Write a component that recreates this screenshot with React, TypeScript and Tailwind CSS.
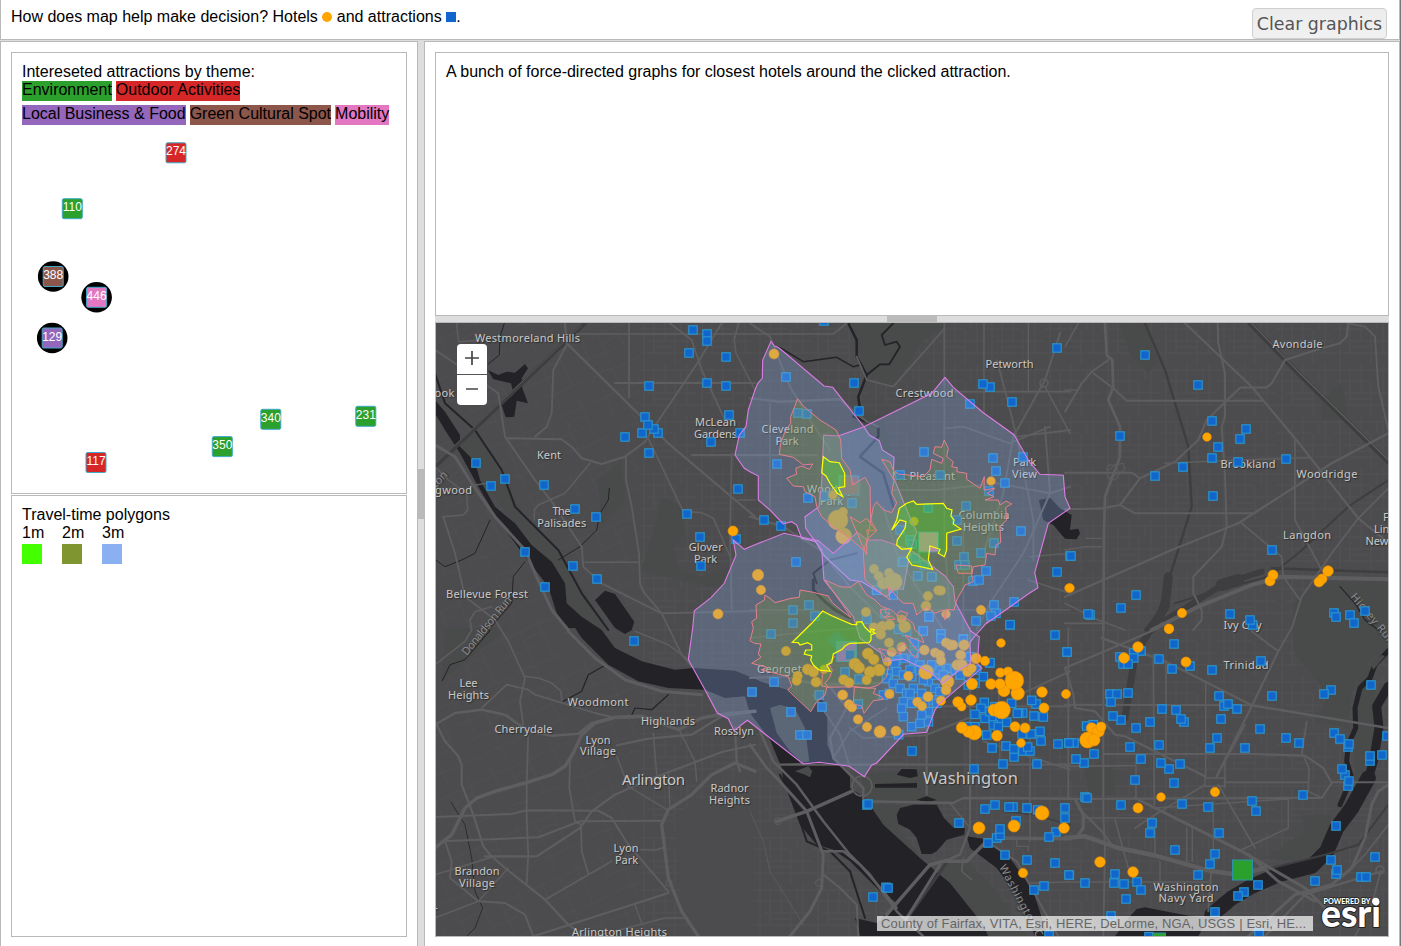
import React from "react";

type Sheet = "A" | "B" | "C" | "D" | "E" | "F" | "G" | "K";

// Survey sheets: each has an origin on the page and three units per pixel.
const ORIGIN: Record<Sheet, [number, number]> = {
  A: [435, 320],
  B: [750, 320],
  C: [1065, 320],
  D: [435, 628],
  E: [750, 628],
  F: [1065, 628],
  G: [745, 580],
  K: [860, 560],
};

const parse = (text: string) =>
  text
    .trim()
    .split(/\s+/)
    .map((pair) => pair.split(",").map(Number));

function trace(...parts: string[]): string {
  const out: string[] = [];
  for (const part of parts) {
    const [ox, oy] = ORIGIN[part[0] as Sheet];
    for (const [x, y] of parse(part.slice(1))) {
      out.push((ox + x / 3).toFixed(1) + "," + (oy + y / 3).toFixed(1));
    }
  }
  return out.join(" ");
}

const PARKS: string[][] = [
  ["A680,530 740,560 750,640 720,680 730,750 800,770 890,740 880,800 830,800 690,770 620,750 650,650"],
  ["B300,10 600,10 520,60 430,200 350,170 310,60"],
  ["B290,260 400,290 430,430 450,560 380,620 340,500 330,390"],
  ["A75,380 120,330 210,480 270,590 370,690 440,800 520,930 470,930 400,850 350,730 240,610 130,470"],
  ["C770,240 830,190 850,300 770,300"],
  ["C160,10 240,10 280,120 250,160 200,110"],
  ["C680,850 760,790 970,780 970,930 690,930"],
  ["E340,440 640,410 640,520 380,520 330,500"],
  ["E360,530 450,530 440,600 510,680 430,640"],
  ["E540,700 640,690 740,790 830,925 700,925 600,760"],
  ["E530,310 640,310 640,410 530,410"],
  ["F680,0 970,0 970,60 900,110 860,190 850,300 750,280 790,200 690,80"],
  ["F880,110 930,110 930,300 900,430 870,480 870,300"],
  ["F710,560 800,560 770,660 690,700 600,690 720,610"],
  ["F60,420 140,410 150,500 70,500"],
  ["A490,480 560,420 570,540 500,620"],
  ["D30,0 220,0 90,100 20,160"],
];

const WATER: string[][] = [
  ["A0,240 30,275 75,345 75,380 120,425 135,480 180,560 240,610 290,675 350,725 390,790 395,850 440,890 500,930", "D540,60 620,100 720,125 775,120 900,128 960,152", "E30,160 120,188 180,250 215,205 232,260 232,350 250,392 275,410 300,440 300,480 345,510 400,590 510,690 600,765 700,890 715,925 330,925 315,870 380,885 440,825 390,790 300,700 250,665 200,650 150,590 100,460 95,420 60,335 0,255", "D930,205 870,210 810,185 700,180 610,160 520,110 440,30 420,0", "A400,925 365,880 340,800 255,690 190,600 130,500 75,400 30,330 0,280"],
  ["A480,840 510,812 540,822 598,905 590,930", "D570,18 540,0"],
  ["A158,150 190,165 215,155 240,158 270,132 279,145 260,175 262,205 279,250 245,242 238,290 212,292 200,255 236,222 228,190 175,178"],
  ["B867,540 900,533 930,565 965,585", "C15,630 40,626 45,640 35,658 0,656", "B910,615 880,600"],
  ["E440,560 450,540 490,530 560,530 582,570 612,600 645,600 643,620 590,635 560,670 545,678 515,678 500,630 480,605 445,588"],
  ["E375,468 501,465 501,479 375,479"],
  ["E440,440 455,423 500,424 503,445 480,450"],
  ["E500,515 530,505 560,516 530,523"],
  ["E650,625 700,632 780,690 850,790 893,925 855,925 800,800 740,720 660,660"],
  ["F150,925 190,870 215,843 240,838 300,850 380,865 430,870 400,925"],
];

const STREAMS: [string[], number][] = [
  [["F970,68 930,110 915,150 885,180 870,240 872,300 850,350 845,400 860,450 825,530"], 5],
  [["F970,175 935,235 942,300 925,400 905,470"], 9],
  [["F910,450 860,540 815,600 785,670 740,715 640,740 560,775 500,810 440,860"], 15],
  [["B295,10 320,60 320,110 350,165 325,230 330,270 310,290 385,320 385,350 330,410 400,460 430,560"], 2.5],
  [["B430,10 395,45 405,75 440,65 450,80 418,133 390,133 350,165"], 1.8],
  [["B85,80 160,125 260,112 310,140 330,135"], 1.5],
  [["A0,160 30,250 120,330 200,450 240,560 370,690 440,820 520,930"], 2],
  [["A208,10 195,50 193,105 160,132"], 1],
  [["A523,505 520,540 495,580 485,630 435,680 370,720"], 1],
  [["A0,718 30,740 80,720 120,700 165,600"], 1],
  [["A270,725 235,770 230,850 160,930", "D165,8 90,95 45,110 22,158"], 1],
  [["D505,115 460,140 440,190 385,220"], 1.2],
  [["D700,200 650,245 600,240 590,262 530,270"], 1.2],
  [["D48,523 90,590 110,690 120,790 143,840 120,900 95,925"], 0.8],
  [["E90,440 130,520 170,640 240,670 300,730 345,870"], 2],
  [["C825,800 870,850 900,900 940,930"], 1.2],
  [["G205,0 205,30 240,65 270,90 315,115"], 3],
  [["B200,790 190,760 240,720 320,700"], 2],
];

const ROADS: [string[], number][] = [
  // north-west
  [["A390,10 395,70 700,370 960,590"], 2.2],
  [["A395,75 355,150 350,280 335,320 300,350"], 1.8],
  [["A582,10 582,232"], 1.8],
  [["A425,42 760,42 960,42", "B0,42 250,42 290,10"], 1.7],
  [["A540,189 960,189"], 1.8],
  [["A860,10 790,125 665,310 630,365 570,410 500,432 440,415 415,385 380,358 215,355"], 2],
  [["A705,10 770,60 800,150 870,300"], 1.8],
  [["A910,10 898,60 903,100 960,210"], 1.6],
  [["A0,90 60,130 190,220 210,350 300,480 350,545 440,680 445,740 500,790 680,880 960,873"], 1.9],
  [["A465,430 390,520 310,555 298,570 298,600"], 1.5],
  [["A573,410 573,480 590,560 612,700 615,790 625,815 680,880", "D740,80 770,115"], 1.8],
  [["A640,355 745,575 800,578 835,595 890,720"], 1.7],
  [["A450,727 610,727"], 1.6],
  [["A770,405 960,405", "B0,405 200,405"], 1.8],
  [["A890,400 885,640 890,870"], 1.7],
  [["A910,540 960,540"], 1.7],
  [["A0,375 60,410 110,490 180,590 270,690 300,760 350,870 400,930", "D400,10 480,90 570,155 680,190 800,200"], 3],
  [["A25,590 85,585 98,570 95,520 40,480 0,440"], 1.5],
  [["A25,590 60,700 90,830 130,860 180,900", "D220,40 270,150 255,220 265,290"], 1.8],
  [["A170,860 120,875 105,900 110,930", "D90,40 0,110"], 1.6],
  [["A180,485 110,497"], 1.4],
  [["A65,10 70,65 140,60"], 1.4],
  // south-west
  [["D0,290 60,255 140,245 210,260 280,310 350,323 430,317 470,285 540,268 600,268"], 2.5],
  [["D140,240 215,170 280,185 300,200 480,255 530,267"], 1.8],
  [["D270,145 310,150 350,165 378,190 380,217"], 1.6],
  [["D0,280 30,340 70,385 80,410 80,470 115,560 145,655 165,680 210,720 330,815 400,890 450,925"], 2.2],
  [["D0,660 50,620 90,540 125,510 180,490 270,465 350,440 390,415 415,375 440,320 480,285 540,268 620,265 730,305 800,270 850,260 960,250"], 3.5],
  [["D280,310 275,470 275,570 280,680 275,765"], 1.8],
  [["D435,330 405,400 403,480 420,580 438,590 440,670 460,738"], 1.8],
  [["D0,567 230,558 275,547 490,548 530,570 580,650 700,790"], 2],
  [["D20,640 310,628 435,580 680,578"], 2],
  [["D150,685 305,685 435,600 470,550 540,500 640,455 760,410 860,372 960,350"], 2.2],
  [["D545,352 640,332 770,320 860,265 960,250"], 2.2],
  [["D545,385 580,475 700,547"], 1.5],
  [["D655,315 665,440"], 1.5],
  [["D700,430 705,540"], 1.5],
  [["D730,300 780,400 785,460"], 1.5],
  [["D960,430 900,405 830,440 770,500 700,545 680,590 700,750 740,850 790,925"], 3.3],
  [["D330,815 530,700"], 1.8],
  [["D615,665 660,667 690,657"], 1.6],
  [["D295,925 420,885 700,795"], 2.2],
  [["D600,830 620,885"], 1.4],
  [["D480,925 690,870 750,870"], 1.5],
  [["D0,740 180,685"], 1.5],
  [["D30,640 50,700 45,750 130,820 210,825 270,860 295,925"], 2],
  [["D0,870 130,820 220,720"], 1.5],
  [["D900,300 905,400 915,430"], 2.5],
  [["D760,95 700,50 600,10"], 1.6],
  // north-centre
  [["B0,10 60,50 120,200 180,300 240,390"], 1.8],
  [["B0,235 90,245 270,238 350,305 385,320"], 2.4],
  [["B60,250 60,400 60,560"], 1.6],
  [["B320,110 350,180 430,200 580,30"], 1.8],
  [["B583,10 583,320 583,640 600,900"], 1.8],
  [["B702,10 702,280"], 1.6],
  [["B835,10 835,215"], 1.5],
  [["B600,215 960,215"], 1.7],
  [["B930,40 885,180 790,350 760,520 700,700"], 2],
  [["B885,200 960,340"], 1.6],
  [["B740,120 770,230 800,350 850,600 850,720"], 1.8],
  [["B585,325 640,320 780,370 900,320"], 1.8],
  [["B800,350 960,330"], 1.8],
  [["B430,510 560,510 740,490 900,520 960,500"], 2],
  [["B885,320 900,520 820,700 720,850 680,930"], 2],
  [["B840,710 960,700"], 1.6],
  [["B835,780 960,820"], 1.8],
  [["B400,560 440,700 500,800 580,930"], 2],
  [["B0,590 100,620 210,690 300,800 420,920"], 2.3],
  [["B0,870 190,870 300,900"], 1.5],
  [["B500,870 960,870"], 1.5],
  [["B640,560 640,930"], 1.5],
  // north-east
  [["C360,10 560,200 690,355 880,595 960,660"], 2.2],
  [["C120,10 125,105 142,120 145,200 130,240 165,320 165,410 120,530 117,640 115,930"], 2.8],
  [["C0,275 50,190 80,155 130,120"], 2],
  [["C85,160 145,205 185,242 595,242"], 2],
  [["C0,210 40,210"], 1.6],
  [["C40,10 0,80"], 1.5],
  [["C458,10 460,70 480,160 480,290 470,320 480,470 485,620 470,680 385,770 385,820 410,870 410,900 385,930"], 2],
  [["C850,10 845,50 825,70 770,85 660,120 620,190 605,202 525,203 425,300 400,360 330,425 225,475 165,555 110,565 50,567 0,567"], 2.2],
  [["C225,475 200,458 0,458"], 2],
  [["C165,555 210,580 560,580"], 2],
  [["C300,430 520,420 735,413"], 1.6],
  [["C970,340 800,430 520,610 320,690 0,830"], 2.3],
  [["C850,10 900,20 930,50 940,200 970,330"], 1.8],
  [["C690,355 690,600 770,750"], 1.8],
  [["C970,505 880,595 800,700 710,830 680,925"], 1.9],
  [["C530,610 620,685 650,710 655,770 705,840"], 1.8],
  [["C260,930 400,860 560,795 650,770 970,778"], 4],
  [["C0,690 60,680 110,680"], 1.5],
  [["C62,655 110,655"], 1.3],
  [["C0,850 100,900 180,930"], 1.8],
  [["C0,910 115,910"], 1.8],
  [["C125,450 130,435 150,435 165,460 150,480 130,475 125,455 150,435 175,430 180,450 150,465 130,475"], 1],
  // south-centre
  [["E0,150 100,145 200,170 240,170 410,165 530,235 530,500"], 2.2],
  [["E0,30 200,10 330,0"], 1.4],
  [["E300,300 340,330 530,322"], 2],
  [["E235,170 290,240 240,330 250,390 340,480 340,520 610,525 640,510 960,512"], 2.5],
  [["E250,390 300,310 410,240"], 1.8],
  [["E160,408 90,410 530,410 960,410"], 2.2],
  [["E660,0 660,600"], 2],
  [["E745,120 750,410"], 1.5],
  [["E960,130 680,260 530,320"], 2],
  [["E530,235 960,235"], 1.8],
  [["E700,340 960,425"], 1.8],
  [["E840,100 840,640"], 1.6],
  [["E955,0 955,510"], 1.8],
  [["E0,350 50,420 80,450 170,550 220,680 215,780 180,850 120,925"], 3],
  [["E30,310 70,400 140,470 220,580 300,680 360,740 440,850 520,925"], 2.5],
  [["E80,580 170,550 305,490"], 3.5],
  [["E215,670 280,670 330,710 400,790 440,840"], 2.5],
  [["E220,740 270,780 320,830 325,925"], 2.2],
  [["E410,860 540,710 580,700 650,700 710,640 750,630 960,632"], 3.5],
  [["E470,870 570,710"], 3],
  [["E660,600 630,680 580,700"], 2.4],
  [["E640,690 635,730 665,755"], 1.5],
  [["E710,640 800,700 850,790 925,925"], 2],
  [["E800,630 800,655 835,655 835,670"], 1.3],
  [["E840,765 960,762"], 1.5],
  [["E600,525 660,600"], 1.7],
  [["E0,550 40,640 60,730 160,890"], 0.8],
  [["E190,200 270,320 300,420"], 1.8],
  // south-east
  [["F0,120 200,35 280,0"], 2.2],
  [["F110,30 300,100 560,232 970,300"], 2.4],
  [["F640,70 560,235 455,445"], 2.2],
  [["F560,10 640,70 680,0"], 1.8],
  [["F0,230 560,232"], 2],
  [["F115,0 115,230 115,560 120,660 115,925"], 2],
  [["F265,80 268,530"], 1.8],
  [["F303,100 303,380"], 1.6],
  [["F422,165 422,450"], 1.6],
  [["F480,390 480,480"], 1.5],
  [["F0,120 25,200 30,240 90,250 150,320 180,325 420,445"], 2.2],
  [["F210,510 530,670 720,780 790,850"], 3],
  [["F115,378 560,378 720,383 775,420 800,465 770,510 0,513"], 2.2],
  [["F420,450 480,450 480,475 420,475 420,450"], 1.4],
  [["F213,380 213,513"], 1.6],
  [["F540,290 455,445"], 1.8],
  [["F0,415 210,413"], 1.8],
  [["F480,463 730,463"], 1.8],
  [["F800,463 970,463"], 2],
  [["F725,280 710,380"], 1.8],
  [["F715,383 732,420 730,490 770,510"], 1.6],
  [["F210,600 270,560 420,470"], 1.8],
  [["F460,470 570,660"], 1.7],
  [["F270,540 670,513 670,600 520,670"], 1.5],
  [["F40,540 110,610 140,650"], 2],
  [["F30,513 55,560 55,600 40,620"], 3],
  [["F0,630 60,625 160,660 260,680 440,730 520,740 600,720"], 4.5],
  [["F270,570 270,680"], 1.6],
  [["F365,600 365,700"], 1.5],
  [["F382,600 382,700"], 1.5],
  [["F60,570 270,570"], 1.5],
  [["F150,575 190,720"], 1.6],
  [["F0,762 430,762"], 1.5],
  [["F285,700 285,762"], 1.4],
  [["F440,710 430,850"], 2],
  [["F445,520 445,700"], 1.5],
  [["F550,925 690,800 800,770 860,720 900,630 920,530 940,490 970,470"], 3],
  [["F600,925 720,800 950,730"], 2.3],
  [["F550,680 640,760 750,820"], 3],
  [["F970,590 900,680 840,740"], 1.8],
  [["F870,925 920,830 947,730"], 1.6],
];

const RAILS: [string[], number][] = [
  [["A450,10 230,220 0,440"], 4],
  [["C555,10 700,160 970,425"], 5],
  [["C240,10 300,150 370,380 380,560 330,720 280,880 240,930"], 2.4],
  [["C970,480 850,560 700,700 610,770 460,810 330,850"], 2],
  [["C620,745 970,757"], 2.4],
  [["C590,755 480,790 400,840 300,900"], 6],
  [["C470,795 520,780"], 12],
  [["C310,770 300,860 260,925"], 9],
  [["F260,0 210,80 180,270"], 7],
  [["E600,690 480,860"], 3],
  [["F970,530 880,650 780,680 620,720"], 2],
  [["E760,550 850,560 960,590"], 1.5],
];

const SQUARES: string[] = [
  "A774,30 816,42 816,63 762,99 873,111 642,198 816,189 873,198 630,291 621,339 669,339 657,327 639,315 570,351 642,399 882,285 915,339 828,366 909,507 756,582 795,651 903,657 798,738 123,429 210,477 168,498 327,495 420,567 483,591 270,696 414,738 486,777 330,801",
  "B222,3 108,171 312,189 327,273 144,279 171,282 81,432 174,534 222,528 306,549 42,600 93,618 138,726 129,870 177,855 195,888 129,909 921,84 720,201 699,192 660,252 786,246 522,396 729,414 819,411 738,453 765,489 717,513 450,465 570,465 648,558 534,564 621,600 450,630 813,633 621,663 732,669 693,699 642,711 480,660 496,714 523,735 456,726 504,768 546,771 627,735 645,735 708,753 669,783 687,780 380,810 430,825 921,756 960,708 732,855 792,846 738,880 723,888 678,903 780,915 537,891 519,933 405,880 350,897 280,480 486,672",
  "C240,105 399,195 165,348 441,303 543,327 525,357 459,381 441,414 519,426 354,441 270,468 663,417 444,528 621,690 18,708 213,825 168,864 75,885 69,882 495,882 563,915 555,900 807,879 813,891 855,885 867,909 900,873",
  "D597,39",
  "E63,18 72,162 6,192 123,252 150,321 171,321 208,201 216,237 285,132 300,80 327,153 325,228 640,33 573,18 915,21 951,72 780,-10 719,105 351,531 354,528 486,369 627,585 705,543 735,531 789,537 777,537 831,540 863,546 798,579 740,630 750,622 750,603 945,540 945,570 918,612 897,627 714,645 765,681 831,696 915,705 958,741 882,774 852,786 369,807 408,778 414,780 672,423 759,408 861,408 792,387 726,360 768,354 792,363 819,369 840,369 833,357 873,339 924,348 957,345 870,310 880,267 858,228 852,264 818,255 806,255 845,217 843,318 816,318 897,922 446,320",
  "K130,5 50,90 173,48 215,50 207,170 190,213 243,222 243,235 163,248 163,280 310,238 20,178 115,208 140,215 130,295 110,300 160,300 180,315 105,310 85,340 80,355 110,335 130,345 150,330 155,350 100,370 88,400 70,405 120,385 140,400 160,385 150,400 130,425 155,430 125,445 130,470 155,500 205,485 180,490 205,455 185,465 205,365 225,345 235,330 265,325 250,345 285,330 215,315 205,335 190,360 185,400 225,385 240,395 215,420 230,430 195,430 300,345 180,330 330,290 350,330 370,350 345,370 390,308 325,375 373,427 363,445 345,463 375,475 400,470 405,440 420,480 440,487 400,495 415,500 380,525 325,500 345,500 472,460 455,430 390,455",
  "F327,48 6,72 228,69 206,75 206,90 165,87 174,108 189,108 282,93 321,123 375,114 441,126 588,99 135,198 156,198 189,195 138,222 168,276 144,264 213,300 255,282 291,243 333,246 357,282 348,273 462,204 477,234 489,228 516,243 468,273 621,204 798,186 777,198 918,171 585,303 456,330 435,360 540,360 663,330 702,345 807,315 825,333 849,357 852,348 966,324 951,381 915,399 915,384 840,441 831,423 849,474 852,459 714,501 561,519 573,549 429,537 351,528 327,465 312,423 288,405 345,408 228,393 195,357 282,351 87,378 57,405 33,393 27,345 12,345 210,456 60,507 66,510 168,531 261,585 255,615 462,615 330,666 450,678 435,708 399,741 579,771 537,792 519,804 450,852 582,915 813,594 798,696 813,738 816,726 750,759 930,687 888,747 903,747 60,765 12,741 147,765 150,738 177,768 216,762 228,786 183,813 138,864 252,926 65,294 85,290",
];

const CIRCLES: string[] = [
  "A894,633,15 849,882,15",
  "B72,102,15 723,483,13 249,525,13 279,576,14 264,600,30 281,648,24 492,604,13 24,765,17 33,810,14 372,747,14 386,768,14 417,759,14 400,790,18 430,785,27 534,828,14 565,811,14 573,812,14 528,858,15 588,882,13 693,870,14 957,804,13",
  "C426,351,13 615,783,15 624,765,15 789,753,16 771,777,15 762,786,15 15,804,13 351,879,14 312,926,14",
  "E876,192,16 882,240,15 948,198,13 813,345,13 825,300,15 687,600,18 792,594,18 876,555,21 942,600,16 819,735,14",
  "G123,213,14 363,96,14 386,142,14 411,140,16 407,163,15 434,135,15 479,140,18 470,118,13 432,188,14 440,216,14 470,201,14 427,245,13 369,221,17 386,238,16 330,252,18 342,263,17 402,270,18 375,276,17 365,300,14 188,268,16 205,275,16 158,288,14 155,302,14 213,306,15 237,268,13 296,299,15 312,308,15 293,345,15 312,373,14 321,382,14 339,418,14",
  "K193,270,15 198,336,22 145,348,14 88,402,14 262,365,20 258,390,15 243,422,14 204,410,15 172,426,14 186,438,14 60,515,18 108,513,15 21,501,14 258,248,14 272,255,16 280,255,14 312,255,16 302,285,15 225,278,14 240,285,14 243,302,14 292,315,16 305,315,17 323,335,15 335,325,14 348,295,16 375,303,14 336,372,17 333,420,16 305,440,13 294,426,16 393,372,16 421,338,14 444,335,14 432,392,18 420,372,16 473,400,20 463,362,28 402,450,18 425,450,26 343,518,22 325,515,17 306,503,17 411,527,16 465,500,15 423,249,13",
  "F219,57,16 177,90,16 363,102,15 312,3,14 3,198,13 80,300,16 100,310,18 108,297,15 68,336,24 87,336,18 450,492,14 288,507,13 219,540,15 105,702,16 204,732,16",
];

const REACH_3M: string[][] = [
  ["B63,64 73,78 85,82 222,198 248,202 342,320 358,345 388,362 397,390 432,412 430,470 483,600 500,635 482,690 460,808 432,808 410,830 335,785 300,780 220,705 197,665 155,655 140,615 125,605 100,612 60,570 25,540 25,468 0,455", "A928,445 900,405 913,345 933,320 940,270 960,210", "B23,190 37,175 38,120"],
  ["B221,345 265,348 342,320 545,220 585,172 610,202 700,278 793,345 838,425 870,463 940,466 945,530 960,565 895,610 854,758 864,803 838,820 710,910", "K383,185 345,228 330,247 332,310 305,325 248,370 215,340 180,322 130,297 70,305 62,278 0,235", "B310,890 222,780 215,690 185,650 167,625 165,590 207,560 215,490"],
  ["B0,680 102,640 205,662 250,700 322,637 352,660 395,660 482,690 585,768", "K280,80 285,125 332,213 358,230 352,310 365,325 240,430 225,450 200,517 130,523", "E460,320 380,405 365,412 343,446 298,415 208,403 160,408 0,283", "D937,277 897,308 880,272 847,255 810,185 760,95 773,0", "A778,872 828,833 868,790 903,706 895,660 928,688"],
];

const REACH_2M: string[][] = [
  ["B143,236 160,258 210,300 258,330 272,360 275,415 300,450 308,495 345,472 360,500 362,600 380,632 350,630 355,660 340,690 300,655 250,620 215,590 200,560 195,530 165,515 160,500 130,498 110,475 140,462 137,445 155,438 178,448 188,432 160,435 130,412 88,403 92,370 105,335 122,310 122,290"],
  ["B395,418 420,425 430,450 445,462 520,470 540,450 545,418 575,430 580,415 550,400 555,380 575,382 583,360 595,385 590,410 610,425 605,440 622,443 620,455 650,460 650,478 690,505 703,470 702,510 735,505 712,520 732,530 705,540 745,540 750,555 768,543 785,552 767,562 770,600 750,620 752,668 738,675 735,705 710,700 705,735 670,740 665,765 670,785 645,795 620,840 612,870 590,868 585,900 580,870 555,880 530,860 500,885 490,850 460,850 440,830 415,800 420,840 400,825 345,780 340,700 355,640 370,560 380,545 400,570 425,578 440,548 425,520 432,480"],
  ["G60,45 75,55 90,68 138,55 163,52 165,30 205,37 250,48 262,68 300,100 318,113 300,85 240,0 285,20 315,22 340,5 365,45 390,60 410,80 440,90 455,105 480,112 505,130 510,150 528,165 537,188 480,165 520,215 512,235 482,200 478,188 455,208 470,222 400,205 425,235 430,262 425,290 400,315 370,325 330,320 245,322 240,345 215,365 197,395 160,360 128,330 140,318 130,290 100,282 50,270 65,262 20,250 48,232 40,222 48,192 28,190 15,182 25,145 20,125 35,115 33,75 58,60"],
  ["G328,322 392,325 385,340 410,350 415,358 385,362 357,400 350,378 325,372"],
  ["B300,590 330,608 350,595 365,615 380,632 350,660 350,705"],
  ["B617,735 665,738 665,760 625,760"],
  ["G405,90 425,88 420,98 435,100 418,112 440,108 450,118 425,118 410,105"],
  ["G270,228 250,250 262,270 255,290 240,310 250,322", "G250,322 230,318 232,285 260,240"],
  ["G455,105 465,92 488,100 478,118 460,120"],
];

const REACH_1M: string[][] = [
  ["B220,410 240,425 268,428 284,460 284,500 265,503 278,530 262,520 240,490 228,468 215,458"],
  ["B470,550 490,543 500,553 580,550 590,565 606,570 603,588 612,600 610,612 633,627 590,640 590,690 583,710 565,700 570,688 540,678 535,720 548,748 510,740 485,735 470,712 485,685 455,688 440,675 442,660 465,625 468,605 450,600 438,615 425,630 440,600 448,565"],
  ["G233,93 260,107 320,133 335,134 335,126 350,125 360,142 377,158 378,147 388,149 383,156 391,160 378,165 378,180 372,188 315,190 300,198 292,208 265,222 260,248 245,255 256,274 222,270 205,255 197,240 200,228 178,222 182,210 200,210 200,195 188,188 165,195 160,188 142,187 200,130"],
];

type Label = [string, number, number, number, number?];
const LABELS: Label[] = [
  ["Westmoreland Hills", 527.5, 342, 105],
  ["McLean", 715.5, 426, 41],
  ["Gardens", 715.5, 438, 43],
  ["Kent", 549, 459, 24],
  ["The", 561.5, 515, 18],
  ["Palisades", 561.7, 527, 49],
  ["Glover", 705.7, 551, 34],
  ["Park", 705.5, 563, 23],
  ["Bellevue Forest", 487, 598, 82],
  ["Cleveland", 787.5, 433, 52],
  ["Park", 787, 445, 23],
  ["Crestwood", 924.5, 397, 58],
  ["Petworth", 1009.5, 368, 48],
  ["Woodley", 830, 493, 46],
  ["Park", 831.5, 505, 23],
  ["Mt Pleasant", 923.5, 480, 63],
  ["Columbia", 984, 519, 51],
  ["Heights", 983.5, 531, 41],
  ["Park", 1024.5, 466, 23],
  ["View", 1024.5, 478, 25],
  ["Avondale", 1297.5, 348, 50],
  ["Brookland", 1248, 468, 55],
  ["Woodridge", 1327, 478, 61],
  ["Langdon", 1307, 539, 48],
  ["Ivy City", 1242.5, 629, 38],
  ["Trinidad", 1246, 669, 45],
  ["Lee", 468.5, 687, 18],
  ["Heights", 468.5, 699, 41],
  ["Woodmont", 598, 706, 61],
  ["Highlands", 668, 725, 54],
  ["Cherrydale", 523.5, 733, 58],
  ["Lyon", 598, 744, 25],
  ["Village", 598, 755, 36],
  ["Rosslyn", 734, 735, 40],
  ["Arlington", 653.5, 785, 63, 15],
  ["Radnor", 729.5, 792, 38],
  ["Heights", 729.5, 804, 41],
  ["Lyon", 626, 852, 25],
  ["Park", 626.5, 864, 23],
  ["Brandon", 477, 875, 45],
  ["Village", 477, 887, 36],
  ["Arlington Heights", 619.5, 936, 95],
  ["Washington", 970.5, 784, 95, 16.5],
  ["Washington", 1186, 891, 65],
  ["Navy Yard", 1186, 902, 55],
];

const Lines = ({ rows, color }: { rows: [string[], number][]; color: string }) => (
  <g fill="none" stroke={color} strokeLinejoin="round" strokeLinecap="round">
    {rows.map(([parts, w], i) => (
      <polyline key={i} points={trace(...parts)} strokeWidth={w} />
    ))}
  </g>
);

const Areas = ({ rows, ...rest }: { rows: string[][] } & React.SVGProps<SVGGElement>) => (
  <g {...rest}>
    {rows.map((parts, i) => (
      <polygon key={i} points={trace(...parts)} />
    ))}
  </g>
);

function MapCanvas() {
  return (
    <svg viewBox="436 323 952 613" className="block h-[613px] w-[952px]">
      <defs>
        <pattern id="streets" width="58" height="52" patternUnits="userSpaceOnUse">
          <path d="M0 6H58M0 17H35M10 29H58M0 41H58M6 0V52M16 6V41M27 0V29M37 17V52M49 0V41M16 35H37M43 6V17" fill="none" stroke="#525254" strokeWidth=".8" />
        </pattern>
        <pattern id="lanes" width="64" height="60" patternUnits="userSpaceOnUse" patternTransform="rotate(-24)">
          <path d="M0 9H64M0 28H40M20 46H64M8 0V28M26 9V60M46 0V46M26 20Q36 14 46 20M0 52Q10 40 26 46" fill="none" stroke="#515153" strokeWidth=".8" />
        </pattern>
      </defs>
      <rect x="436" y="323" width="952" height="613" fill="#4c4c4e" />
      <rect x="436" y="323" width="204" height="613" fill="url(#lanes)" />
      <rect x="640" y="323" width="748" height="613" fill="url(#streets)" />
      <polygon points={trace("D720,560 790,520 950,480 960,925 790,925 740,850")} fill="#4c4c4e" />
      <Areas rows={PARKS} fill="#494b4a" />
      <Lines rows={STREAMS} color="#242328" />
      <Areas rows={WATER} fill="#232227" />
      <polygon points={trace("E60,240 90,230 135,242 165,300 178,400 158,404 120,370 80,315")} fill="#494b4a" />
      <polygon points={trace("E135,430 175,415 187,430 180,448 165,440 150,435")} fill="#494b4a" />
      <polygon points={trace("F915,105 950,80 960,85 925,125")} fill="#494b4a" />
      <Lines rows={RAILS} color="#3e3e40" />
      <polyline points={trace("A440,15 225,220 0,432")} fill="none" stroke="#5a5a5c" strokeWidth=".8" />
      <polyline points={trace("C560,10 705,160 970,420")} fill="none" stroke="#5e5e60" strokeWidth="1.2" />
      <Lines rows={ROADS} color="#5e5e60" />
      <g fill="none" stroke="#5e5e60" strokeWidth="1.6">
        <circle cx="862" cy="786" r="10" />
        <circle cx="1044" cy="383" r="4" />
        <circle cx="778" cy="821" r="3.5" strokeWidth="1" />
        <circle cx="819" cy="883" r="3.5" strokeWidth="1" />
        <circle cx="1380" cy="870" r="4" />
        <circle cx="669" cy="883" r="3" strokeWidth="1" />
      </g>

      <g fill="#c9c9c9" fontFamily="'Noto Sans', sans-serif" fontSize="11" style={{ textShadow: "1px 1px 1px #2b2b2b" }}>
        {LABELS.map(([text, x, y, w, size], i) => (
          <text key={i} x={x - w / 2} y={y} textLength={w} fontSize={size ?? 11}>
            {text}
          </text>
        ))}
        <text x="434.5" y="397" letterSpacing=".3">ook</text>
        <text x="435" y="494" letterSpacing=".4">gwood</text>
        <text x="757" y="673" letterSpacing=".4">Georget</text>
        <text x="1383" y="521">Fort</text>
        <text x="1374" y="533">Lincoln</text>
        <text x="1365.5" y="545">New</text>
        <text x="433" y="914">r</text>
        <g fill="#8b8b8d">
          <text transform="translate(467 656) rotate(-51)" textLength="72">Donaldson Run</text>
          <text transform="translate(999 867) rotate(62)" letterSpacing=".8">Washington Channel</text>
          <text transform="translate(1350 597) rotate(50)" letterSpacing=".6">Hickey Run</text>
          <text transform="translate(436 488) rotate(-46)">ton</text>
        </g>
      </g>

      <g fill="#1066cc" stroke="#2c93cb" strokeWidth="1.2">
        {SQUARES.flatMap((row) => {
          const [ox, oy] = ORIGIN[row[0] as Sheet];
          return parse(row.slice(1)).map(([x, y]) => (
            <rect key={row[0] + x + "-" + y} x={ox + x / 3 - 4.2} y={oy + y / 3 - 4.2} width="8.4" height="8.4" />
          ));
        })}
      </g>
      <g stroke="#2c93a8" strokeWidth="1">
        <rect x="840" y="476" width="19" height="19" fill="#8c564b" />
        <rect x="918.5" y="532" width="20" height="20" fill="#e377c2" />
        <rect x="836.5" y="641.5" width="20" height="20" fill="#9467bd" />
        <rect x="845.5" y="650.5" width="9" height="9" fill="#1066cc" />
        <rect x="1232.5" y="860" width="20" height="20" fill="#2ca02c" />
        <rect x="1152.5" y="933" width="13" height="10" fill="#2ca02c" />
      </g>
      <g fill="#ffa500" stroke="#e98f05" strokeWidth=".6">
        {CIRCLES.flatMap((row) => {
          const [ox, oy] = ORIGIN[row[0] as Sheet];
          return parse(row.slice(1)).map(([x, y, r]) => (
            <circle key={row[0] + x + "-" + y} cx={ox + x / 3} cy={oy + y / 3} r={r / 3} />
          ));
        })}
      </g>

      <Areas rows={REACH_3M} fill="#8cb0f2" fillOpacity=".27" stroke="#dc7ce4" strokeWidth="1.1" />
      <Areas rows={REACH_2M} fill="#7f972f" fillOpacity=".25" stroke="#e5808c" strokeWidth="1" />
      <Areas rows={REACH_1M} fill="#44ee00" fillOpacity=".3" stroke="#ffff00" strokeWidth="1.2" />
      <polygon points="837,631 847,641 837,651 827,641" fill="#4aa87a" fillOpacity=".4" />

      <g fontFamily="Lato, sans-serif" fontWeight="900" fill="#fff" stroke="#222" strokeWidth="2" paintOrder="stroke" strokeLinejoin="round">
        <text x="1323.5" y="903.5" fontSize="7.6" textLength="47" lengthAdjust="spacingAndGlyphs" strokeWidth="1.5">
          POWERED BY
        </text>
        <text x="1321" y="926.5" fontSize="37" textLength="60" lengthAdjust="spacingAndGlyphs">
          esri
        </text>
        <circle cx="1375.7" cy="901.3" r="3.6" stroke="none" />
      </g>
    </svg>
  );
}

const NODES = [
  { id: 274, x: 176, y: 152.8, fill: "#d62728" },
  { id: 110, x: 72.3, y: 208.7, fill: "#2ca02c" },
  { id: 388, x: 53.2, y: 276.5, fill: "#8c564b", ring: true },
  { id: 446, x: 96.6, y: 297.3, fill: "#e377c2", ring: true },
  { id: 129, x: 52.2, y: 338, fill: "#9467bd", ring: true },
  { id: 340, x: 270.8, y: 419.3, fill: "#2ca02c" },
  { id: 231, x: 365.8, y: 416.3, fill: "#2ca02c" },
  { id: 350, x: 222.3, y: 446.6, fill: "#2ca02c" },
  { id: 117, x: 96, y: 462.5, fill: "#d62728" },
];

function ThemeGraph() {
  return (
    <svg viewBox="22 125 374 368" className="block h-[368px] w-[374px]">
      {NODES.map((n) => (
        <g key={n.id}>
          {n.ring && <circle cx={n.x} cy={n.y} r="15.3" fill="#000" />}
          <rect x={n.x - 10} y={n.y - 10} width="20" height="20" rx="1.6" fill={n.fill} stroke="#3fa9c9" strokeWidth="1" />
          <text x={n.x} y={n.y + 2.5} textAnchor="middle" fill="#fff" fontSize="12" fontFamily="'Liberation Sans', sans-serif">
            {n.id}
          </text>
        </g>
      ))}
    </svg>
  );
}

const Tag = ({ className, children }: { className: string; children: React.ReactNode }) => (
  <span className={"h-5 whitespace-nowrap leading-[17px] " + className}>{children}</span>
);

const Reach = ({ label, className }: { label: string; className: string }) => (
  <div className="w-10">
    <div className="h-5 leading-[18px]">{label}</div>
    <div className={"size-5 " + className} />
  </div>
);

export default function App() {
  return (
    <div className="flex h-[946px] w-[1401px] overflow-hidden bg-white font-['Liberation_Sans',sans-serif] text-base leading-[18px] text-black">
      <div className="flex w-[1400px] shrink-0 flex-col bg-[#ddd]">
        <header className="flex h-10 shrink-0 items-start justify-between border-b border-l border-r border-[#b9b9b9] bg-white pl-[10px] pr-3">
          <p className="flex items-center whitespace-pre pt-2">
            How does map help make decision? Hotels <i className="inline-block size-[10px] rounded-full bg-[#ffa500]" /> and attractions <i className="inline-block size-[10px] bg-[#1066cc]" />.
          </p>
          <button className="mt-2 h-[31px] w-[135px] rounded border border-[#cfcfcf] bg-gradient-to-b from-[#ececec] to-[#f1f1f1] font-['DejaVu_Sans',sans-serif] text-[17.4px] leading-[30px] whitespace-nowrap text-[#555]">
            Clear graphics
          </button>
        </header>
        <div className="mt-px flex min-h-0 flex-1">
          <section className="flex w-[418px] shrink-0 flex-col gap-px border border-b-0 border-[#b9b9b9] bg-white p-[10px]">
            <div className="flex h-[442px] shrink-0 flex-col border border-[#b9b9b9] bg-white px-[10px] pt-[10px]">
              <p>Intereseted attractions by theme:</p>
              <div className="flex gap-1">
                <Tag className="bg-[#2ca02c]">Environment</Tag>
                <Tag className="bg-[#d62728]">Outdoor Activities</Tag>
              </div>
              <div className="mt-1 flex gap-1">
                <Tag className="bg-[#9467bd]">Local Business &amp; Food</Tag>
                <Tag className="bg-[#8c564b]">Green Cultural Spot</Tag>
                <Tag className="bg-[#e377c2]">Mobility</Tag>
              </div>
              <ThemeGraph />
            </div>
            <div className="h-[442px] shrink-0 border border-[#b9b9b9] bg-white px-[10px] pt-[10px]">
              <p>Travel-time polygons</p>
              <div className="flex">
                <Reach label="1m" className="bg-[#44ff00]" />
                <Reach label="2m" className="bg-[#7f9530]" />
                <Reach label="3m" className="bg-[#8bb0f1]" />
              </div>
            </div>
          </section>
          <div className="flex w-[6px] shrink-0 items-center">
            <div className="h-[50px] w-full bg-[#bababa]" />
          </div>
          <section className="flex w-[976px] shrink-0 flex-col border border-b-0 border-[#b9b9b9] bg-white p-[10px]">
            <div className="h-[264px] shrink-0 border border-[#b9b9b9] px-[10px] pt-[10px]">
              <p>A bunch of force-directed graphs for closest hotels around the clicked attraction.</p>
            </div>
            <div className="flex h-[6px] shrink-0 justify-center bg-[#ddd]">
              <div className="h-full w-[50px] bg-[#bababa]" />
            </div>
            <div className="relative h-[615px] shrink-0 overflow-hidden border border-[#b9b9b9]">
              <MapCanvas />
              <div className="absolute left-[21px] top-[21px] flex w-[30px] flex-col overflow-hidden rounded bg-white text-[#444]">
                <button className="flex h-[31px] items-start justify-center border-b border-[#555] pt-[6px]">
                  <svg viewBox="0 0 16 16" className="size-4" stroke="currentColor" strokeWidth="1.7">
                    <path d="M8 1V15M1 8H15" />
                  </svg>
                </button>
                <button className="flex h-[30px] items-start justify-center pt-[6px]">
                  <svg viewBox="0 0 16 16" className="size-4" stroke="currentColor" strokeWidth="1.7">
                    <path d="M2 8H14" />
                  </svg>
                </button>
              </div>
              <div className="absolute left-[441px] top-[593px] h-[15px] w-[436px] bg-white/70 pl-1 text-[13px] leading-[15px] tracking-[0.13px] whitespace-nowrap text-[#666]">
                County of Fairfax, VITA, Esri, HERE, DeLorme, NGA, USGS | Esri, HE...
              </div>
            </div>
          </section>
        </div>
      </div>
      <div className="w-px shrink-0 bg-[#777]" />
    </div>
  );
}
